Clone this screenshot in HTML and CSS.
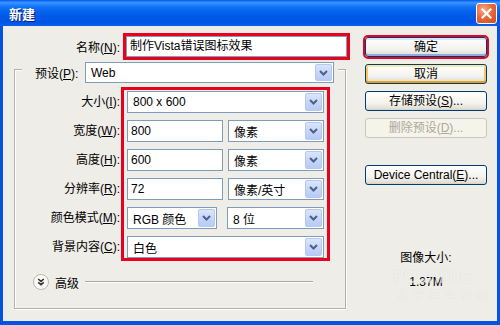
FILE: index.html
```html
<!DOCTYPE html>
<html lang="zh-CN">
  <head>
    <meta charset="UTF-8" />
    <title>新建</title>
    <link rel="stylesheet" href="styles.css">
  </head>
  <body>
    <div class="window">
      <div class="titlebar">
        <span class="title">新建</span>
        <span class="close">
          <svg width="11" height="11" viewBox="0 0 11 11">
            <path d="M1.5 1.5 L9.5 9.5 M9.5 1.5 L1.5 9.5" stroke="#fff" stroke-width="2.2" stroke-linecap="square" />
          </svg>
        </span>
      </div>

      <div class="client">
        <div class="left">
          <div class="name-row">
            <span class="name-label">名称(<u>N</u>):</span>
            <div class="mark name-mark">
              <div class="textbox">制作Vista错误图标效果</div>
            </div>
          </div>

          <div class="group">
            <div class="preset-row">
              <span class="preset-label">预设(<u>P</u>):</span>
              <div class="select grow">
                <span class="val">Web</span>
                <span class="arrow"><svg width="9" height="6" viewBox="0 0 9 6"><path d="M1 1 L4.5 4.5 L8 1" fill="none" stroke="#4d6185" stroke-width="2" /></svg></span>
              </div>
            </div>

            <div class="rows">
              <div class="labels">
                <div class="lab">大小(<u>I</u>):</div>
                <div class="lab">宽度(<u>W</u>):</div>
                <div class="lab">高度(<u>H</u>):</div>
                <div class="lab">分辨率(<u>R</u>):</div>
                <div class="lab">颜色模式(<u>M</u>):</div>
                <div class="lab">背景内容(<u>C</u>):</div>
              </div>

              <div class="mark fields">
                <div class="field-row">
                  <div class="select grow">
                    <span class="val">800 x 600</span>
                    <span class="arrow"><svg width="9" height="6" viewBox="0 0 9 6"><path d="M1 1 L4.5 4.5 L8 1" fill="none" stroke="#4d6185" stroke-width="2" /></svg></span>
                  </div>
                </div>
                <div class="field-row">
                  <div class="textbox half">800</div>
                  <div class="select half">
                    <span class="val">像素</span>
                    <span class="arrow"><svg width="9" height="6" viewBox="0 0 9 6"><path d="M1 1 L4.5 4.5 L8 1" fill="none" stroke="#4d6185" stroke-width="2" /></svg></span>
                  </div>
                </div>
                <div class="field-row">
                  <div class="textbox half">600</div>
                  <div class="select half">
                    <span class="val">像素</span>
                    <span class="arrow"><svg width="9" height="6" viewBox="0 0 9 6"><path d="M1 1 L4.5 4.5 L8 1" fill="none" stroke="#4d6185" stroke-width="2" /></svg></span>
                  </div>
                </div>
                <div class="field-row">
                  <div class="textbox half">72</div>
                  <div class="select half">
                    <span class="val">像素/英寸</span>
                    <span class="arrow"><svg width="9" height="6" viewBox="0 0 9 6"><path d="M1 1 L4.5 4.5 L8 1" fill="none" stroke="#4d6185" stroke-width="2" /></svg></span>
                  </div>
                </div>
                <div class="field-row">
                  <div class="select mode">
                    <span class="val">RGB 颜色</span>
                    <span class="arrow"><svg width="9" height="6" viewBox="0 0 9 6"><path d="M1 1 L4.5 4.5 L8 1" fill="none" stroke="#4d6185" stroke-width="2" /></svg></span>
                  </div>
                  <div class="select bits">
                    <span class="val">8 位</span>
                    <span class="arrow"><svg width="9" height="6" viewBox="0 0 9 6"><path d="M1 1 L4.5 4.5 L8 1" fill="none" stroke="#4d6185" stroke-width="2" /></svg></span>
                  </div>
                </div>
                <div class="field-row">
                  <div class="select grow">
                    <span class="val">白色</span>
                    <span class="arrow"><svg width="9" height="6" viewBox="0 0 9 6"><path d="M1 1 L4.5 4.5 L8 1" fill="none" stroke="#4d6185" stroke-width="2" /></svg></span>
                  </div>
                </div>
              </div>
            </div>

            <div class="advanced">
              <span class="adv-icon">
                <svg width="16" height="16" viewBox="0 0 16 16">
                  <circle cx="8" cy="8" r="7.5" fill="#fbfbf8" stroke="#b9b8b0" />
                  <path d="M5.2 5 L8 7.4 L10.8 5 M5.2 8.3 L8 10.7 L10.8 8.3" fill="none" stroke="#333" stroke-width="1.6" />
                </svg>
              </span>
              <span class="adv-text">高级</span>
              <span class="adv-line"></span>
            </div>
          </div>
        </div>

        <div class="right">
          <div class="btn default">确定</div>
          <div class="btn hover">取消</div>
          <div class="btn">存储预设(<u>S</u>)...</div>
          <div class="btn disabled">删除预设(<u>D</u>)...</div>
          <div class="btn central">Device Central(<u>E</u>)...</div>
          <div class="size-title">图像大小:</div>
          <div class="size-value">1.37M</div>
        </div>
      </div>

      <div class="watermark">
        <div class="wm-big">PConline</div>
        <div class="wm-small">太平洋电脑网</div>
      </div>
    </div>
  </body>
</html>
```

FILE: styles.css
```css
* {
  box-sizing: border-box;
}
body {
  margin: 0;
  font-family: "Liberation Sans", "Noto Sans CJK SC", sans-serif;
  font-size: 12px;
  color: #000;
}
u {
  text-decoration: underline;
  text-underline-offset: 1px;
}
.window {
  position: relative;
  width: 500px;
  height: 325px;
  background: #0453e0;
  display: flex;
  flex-direction: column;
}
.titlebar {
  height: 26px;
  display: flex;
  align-items: center;
  justify-content: space-between;
  padding: 0 3px 0 9px;
  background: linear-gradient(180deg, #0058ee 0%, #3d95ff 10%, #2a87fd 16%, #1173f7 26%, #0462ed 45%, #0058e6 65%, #0055e4 85%, #0a5ff0 100%);
}
.title {
  color: #fff;
  font-family: "Noto Sans CJK SC", sans-serif;
  font-size: 13px;
  font-weight: bold;
  text-shadow: 1px 1px 0 #0a1e78;
}
.close {
  width: 21px;
  height: 21px;
  border: 1px solid #fff;
  border-radius: 3px;
  background: radial-gradient(circle at 35% 30%, #f6ad8c 0%, #e8693c 45%, #d24a18 100%);
  display: flex;
  align-items: center;
  justify-content: center;
}
.client {
  height: 295px;
  margin: 0 3px;
  background: #eeede7;
  display: flex;
}
.left {
  width: 352px;
  padding-top: 7px;
}
.name-row {
  display: flex;
  align-items: center;
  height: 27px;
}
.name-label {
  width: 117px;
  text-align: right;
  margin-right: 3px;
}
.mark {
  border: 3px solid #e8001c;
}
.name-mark {
  width: 227px;
}
.textbox {
  height: 21px;
  line-height: 19px;
  padding-left: 3px;
  background: #fff;
  border: 1px solid #7f9db9;
  white-space: nowrap;
}
.group {
  width: 332px;
  margin: 9px 0 0 11px;
  border: 1px solid #b3b2aa;
  box-shadow: 1px 1px 0 #fff, inset 1px 1px 0 #fff;
  padding-bottom: 18px;
}
.preset-row {
  display: flex;
  align-items: center;
  width: 316px;
  height: 21px;
  margin: -8px 0 0 7px;
  padding: 0 4px 0 13px;
  background: #eeede7;
}
.preset-label {
  width: 50px;
}
.select {
  position: relative;
  height: 22px;
  display: flex;
  align-items: center;
  justify-content: space-between;
  background: #fff;
  border: 1px solid #7f9db9;
  padding: 1px 1px 1px 5px;
  white-space: nowrap;
}
.preset-row .select {
  height: 21px;
}
.grow {
  flex: 1;
}
.arrow {
  width: 17px;
  height: 100%;
  display: flex;
  align-items: center;
  justify-content: center;
  background: linear-gradient(180deg, #dbe5fb 0%, #c6d6fa 50%, #b8cbf6 100%);
  border: 1px solid #b6c7f0;
  border-radius: 2px;
}
.rows {
  display: flex;
  margin-top: 4px;
}
.labels {
  width: 106px;
  padding: 4px 1px 0 0;
  display: flex;
  flex-direction: column;
  gap: 7px;
}
.lab {
  height: 22px;
  line-height: 22px;
  text-align: right;
  white-space: nowrap;
}
.fields {
  width: 209px;
  padding: 1px 3px 0;
  display: flex;
  flex-direction: column;
  gap: 7px;
}
.field-row {
  height: 22px;
  display: flex;
  justify-content: space-between;
}
.field-row .textbox {
  height: 22px;
  line-height: 20px;
}
.half {
  width: 96px;
}
.mode {
  width: 90px;
}
.bits {
  width: 97px;
}
.advanced {
  display: flex;
  align-items: center;
  height: 16px;
  margin-top: 13px;
  padding-left: 18px;
}
.adv-icon {
  width: 16px;
  height: 16px;
  display: flex;
}
.adv-text {
  margin-left: 6px;
}
.adv-line {
  flex: 1;
  height: 2px;
  margin: 0 32px 0 6px;
  border-top: 1px solid #a9a89f;
  border-bottom: 1px solid #fff;
}
.right {
  flex: 1;
  padding: 11px 0 0 10px;
  display: flex;
  flex-direction: column;
}
.btn {
  width: 122px;
  height: 20px;
  line-height: 18px;
  margin-top: 7px;
  text-align: center;
  border: 1px solid #003c74;
  border-radius: 3px;
  background: linear-gradient(180deg, #ffffff 0%, #f4f3ee 60%, #e3e1d8 90%, #d6d0c5 100%);
  white-space: nowrap;
}
.btn.default {
  margin-top: 0;
  outline: 2px solid #e8001c;
  box-shadow: inset 0 -2px 0 #89ade4, inset 0 2px 0 #cee7ff;
}
.btn.hover {
  box-shadow: inset 0 2px 0 #ffe7a2, inset 0 -2px 0 #e5a01a, inset 2px 0 0 #f8c65a, inset -2px 0 0 #f8c65a;
}
.btn.disabled {
  color: #aca899;
  border-color: #c9c7ba;
  background: #f5f4ea;
}
.btn.central {
  margin-top: 27px;
}
.size-title,
.size-value {
  width: 122px;
  text-align: center;
  line-height: 14px;
}
.size-title {
  margin-top: 66px;
}
.size-value {
  margin-top: 10px;
}
.watermark {
  position: absolute;
  left: 393px;
  top: 264px;
  pointer-events: none;
  color: rgba(255, 255, 255, 0.6);
  text-shadow: 0 0 1px rgba(150, 150, 150, 0.25);
}
.wm-big {
  font-family: "DejaVu Sans", sans-serif;
  font-size: 18px;
  line-height: 24px;
  transform: scaleY(1.2);
}
.wm-small {
  font-family: "Noto Sans CJK SC", sans-serif;
  font-size: 11px;
  line-height: 13px;
  letter-spacing: 5px;
  margin-left: 4px;
}
```
